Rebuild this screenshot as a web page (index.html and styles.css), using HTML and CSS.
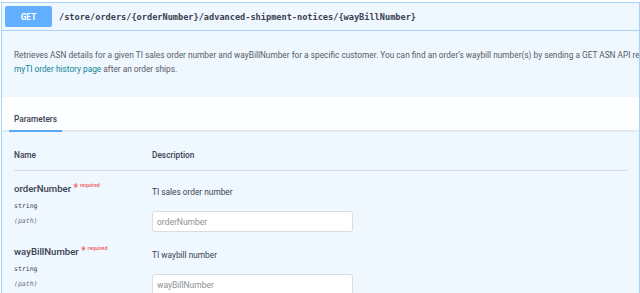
FILE: index.html
```html
<!DOCTYPE html>
<html lang="en">
<head>
    <meta charset="UTF-8">
    <meta name="viewport" content="width=device-width, initial-scale=1.0">
    <title>Advanced shipment notices</title>
    <link rel="stylesheet" href="styles.css">
</head>
<body>
    <div class="opblock">
        <div class="opblock-summary">
            <span class="method">GET</span>
            <span class="path">/store/orders/{orderNumber}/advanced-shipment-notices/{wayBillNumber}</span>
        </div>

        <div class="opblock-description">
            <p>Retrieves ASN details for a given TI sales order number and wayBillNumber for a specific customer. You can find an order’s waybill number(s) by sending a GET ASN API request<br>
            <a href="#">myTI order history page</a> after an order ships.</p>
        </div>

        <div class="tab-header">
            <div class="tab">Parameters</div>
        </div>

        <div class="parameters">
            <div class="param-head">
                <div class="col-name">Name</div>
                <div class="col-desc">Description</div>
            </div>

            <div class="param-row">
                <div class="col-name">
                    <div class="param-name">orderNumber <span class="req">*<sup>required</sup></span></div>
                    <div class="param-type">string</div>
                    <div class="param-in">(path)</div>
                </div>
                <div class="col-desc">
                    <div class="param-desc">TI sales order number</div>
                    <input type="text" placeholder="orderNumber">
                </div>
            </div>

            <div class="param-row">
                <div class="col-name">
                    <div class="param-name">wayBillNumber <span class="req">*<sup>required</sup></span></div>
                    <div class="param-type">string</div>
                    <div class="param-in">(path)</div>
                </div>
                <div class="col-desc">
                    <div class="param-desc">TI waybill number</div>
                    <input type="text" placeholder="wayBillNumber">
                </div>
            </div>
        </div>
    </div>
</body>
</html>
```

FILE: styles.css
```css
/* page */
body {
    margin: 0;
    font-family: Roboto, "Liberation Sans", sans-serif;
    color: #3b4151;
    background-color: #ffffff;
}

/* operation block */
.opblock {
    margin: 2px 0 0 1px;
    border: 1px solid #a9d1fa;
    background-color: #eff7ff;
    overflow: hidden;
    height: 400px;
}
.opblock-summary {
    display: flex;
    align-items: center;
    padding: 3px;
    border-bottom: 1px solid #a9d1fa;
}
.method {
    display: flex;
    align-items: center;
    justify-content: center;
    width: 47px;
    height: 21px;
    border-radius: 2px;
    background-color: #61affe;
    color: #ffffff;
    font-size: 8.4px;
    font-weight: 700;
}
.path {
    margin-left: 7px;
    font-family: "DejaVu Sans Mono", "Liberation Mono", monospace;
    font-size: 8.6px;
    font-weight: 700;
    color: #3b4151;
}

/* description */
.opblock-description {
    padding: 17px 12px 21px;
}
.opblock-description p {
    margin: 0;
    font-size: 8.3px;
    line-height: 14px;
    color: #585c64;
    white-space: nowrap;
}
.opblock-description a {
    color: #118496;
    text-decoration: none;
}

/* tabs */
.tab-header {
    padding: 10px 7px 0;
    height: 23px;
    background-color: rgba(255, 255, 255, 0.85);
    box-shadow: 0 1px 2px rgba(0, 0, 0, 0.1);
}
.tab {
    display: inline-block;
    padding: 0 5px 4px;
    font-size: 8.3px;
    line-height: 14px;
    font-weight: 500;
    color: #3b4151;
    border-bottom: 2px solid #5aa7f5;
}

/* parameter table */
.parameters {
    padding: 0 12px;
}
.param-head {
    display: flex;
    padding: 18px 0 8px;
    border-bottom: 1px solid #d3dae3;
    font-size: 8.3px;
    line-height: 14px;
    font-weight: 500;
}
.param-row {
    display: flex;
    height: 63px;
}
.col-name {
    width: 138px;
    flex-shrink: 0;
}
.col-desc {
    flex: 1;
}
.param-row .col-name {
    padding-top: 7px;
}
.param-name {
    font-size: 9.6px;
    line-height: 14px;
    font-weight: 500;
}
.req {
    color: #f05a5a;
    font-size: 10px;
    vertical-align: 1px;
}
.req sup {
    margin-left: 2px;
    font-size: 5.4px;
    vertical-align: 4px;
}
.param-type {
    margin-top: 4px;
    font-family: "DejaVu Sans Mono", "Liberation Mono", monospace;
    font-size: 6.5px;
    line-height: 12px;
}
.param-in {
    margin-top: 3px;
    font-family: "DejaVu Sans Mono", "Liberation Mono", monospace;
    font-size: 6.5px;
    line-height: 12px;
    font-style: italic;
    color: #6b6f78;
}
.param-row .col-desc {
    padding-top: 14px;
}
.param-desc {
    font-size: 8.3px;
    line-height: 14px;
}
.param-row input {
    box-sizing: border-box;
    display: block;
    margin-top: 12px;
    width: 201px;
    height: 21px;
    padding: 0 4px;
    border: 1px solid #dcdcdc;
    border-radius: 3px;
    background-color: #ffffff;
    font-family: Roboto, "Liberation Sans", sans-serif;
    font-size: 8.5px;
    color: #3b4151;
    outline: none;
}
.param-row input::placeholder {
    color: #8e9096;
}
```
